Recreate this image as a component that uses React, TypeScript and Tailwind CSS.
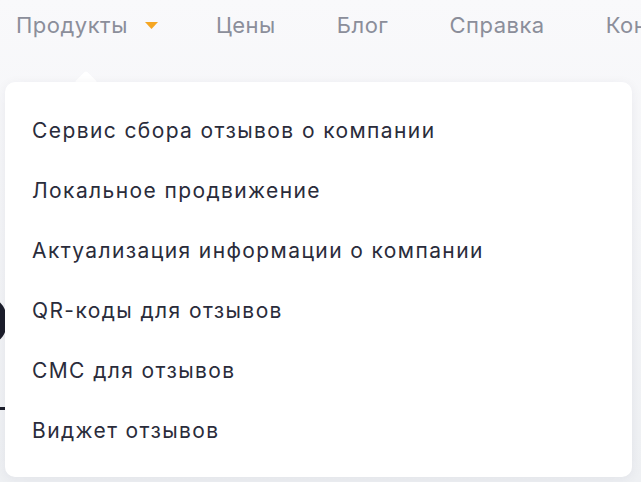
const items = [
  "Сервис сбора отзывов о компании",
  "Локальное продвижение",
  "Актуализация информации о компании",
  "QR-коды для отзывов",
  "СМС для отзывов",
  "Виджет отзывов",
];

export default function App() {
  return (
    <div
      className="relative h-[482px] w-[641px] overflow-hidden bg-gradient-to-b from-[#f9f9fb] to-[#eef0f3]"
      style={{ fontFamily: "Inter, 'Noto Sans', sans-serif" }}
    >
      {/* content hidden under the menu */}
      <div className="absolute left-[-30px] top-[298px] h-[46px] w-[36px] rounded-full border-[7px] border-[#1c1e2b]" />
      <div className="absolute left-0 top-[407px] h-[3px] w-[7px] bg-[#1c1e2b]" />

      <nav className="flex h-[50px] items-center whitespace-nowrap pl-[16px] text-[22px] tracking-[0.5px] text-[#8b8e9a]">
        <span>Продукты</span>
        <svg className="ml-[17px] shrink-0" width="13" height="7" viewBox="0 0 13 7">
          <path d="M0 0h13L6.5 7z" fill="#f5a623" />
        </svg>
        <span className="ml-[58px]">Цены</span>
        <span className="ml-[61px]">Блог</span>
        <span className="ml-[61px]">Справка</span>
        <span className="ml-[61px]">Контакты</span>
      </nav>

      <div className="relative ml-[5px] mt-[32px] w-[627px]">
        <div className="absolute left-[73px] top-[-8px] h-[16px] w-[16px] rotate-45 rounded-[2px] bg-white" />
        <div className="relative rounded-[10px] bg-white pb-[16px] pl-[27px] pt-[19px] shadow-[0_2px_12px_rgba(30,35,60,0.06)]">
          {items.map((t) => (
            <div
              key={t}
              className="flex h-[60px] items-center whitespace-nowrap text-[21px] tracking-[1.4px] text-[#2a2c3b]"
            >
              {t}
            </div>
          ))}
        </div>
      </div>
    </div>
  );
}
